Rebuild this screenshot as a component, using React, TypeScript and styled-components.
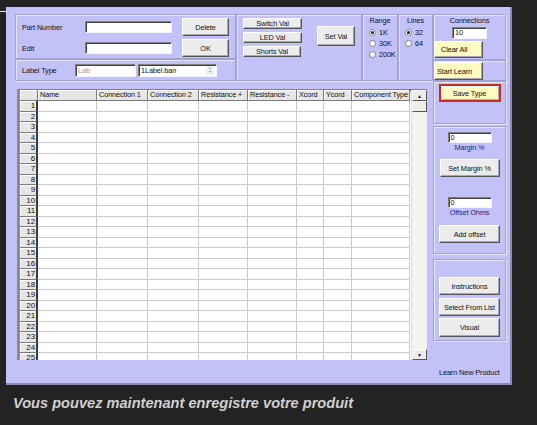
import React from 'react';
import styled, { createGlobalStyle, css } from 'styled-components';

const GlobalStyle = createGlobalStyle`
  body {
    margin: 0;
    background: #232323;
    font-family: 'Liberation Sans', Arial, sans-serif;
  }
`;

const LAV = '#c2c2f9';

const Page = styled.div`
  position: relative;
  width: 537px;
  height: 425px;
  box-sizing: border-box;
  padding: 7px 0 0 6px;
  font-size: 7.3px;
  letter-spacing: -0.1px;
  color: #111;
`;

const CornerMark = styled.div`
  position: absolute;
  left: 0;
  top: 11px;
  width: 6px;
  height: 1px;
  background: #e8e8e8;
`;

const Window = styled.div`
  width: 506px;
  height: 378px;
  box-sizing: border-box;
  background: ${LAV};
  border-right: 2px solid #8c8cb8;
  border-bottom: 2px solid #8c8cb8;
  padding: 7px 0 0 9px;
  display: flex;
`;

const LeftCol = styled.div`
  width: 418px;
  display: flex;
  flex-direction: column;
`;

const RightCol = styled.div`
  width: 73px;
  display: flex;
  flex-direction: column;
`;

const TopRow = styled.div`
  display: flex;
  height: 67px;
`;

const Frame = styled.div<{ $w?: number; $h?: number }>`
  box-sizing: border-box;
  ${(p) => p.$w && css`width: ${p.$w}px;`}
  ${(p) => p.$h && css`height: ${p.$h}px;`}
  border: 1px solid #a2a2d6;
  box-shadow: inset 1px 1px 0 #e6e6ff, 1px 1px 0 #e6e6ff;
`;

const Stack = styled.div<{ $w: number }>`
  width: ${(p) => p.$w}px;
  display: flex;
  flex-direction: column;
`;

const PartFrame = styled(Frame)`
  display: grid;
  grid-template-columns: 63px 87px 47px;
  grid-template-rows: 18px 18px;
  row-gap: 3px;
  padding: 3px 0 0 6px;
  align-items: center;
  & > button {
    margin-left: 10px;
  }
`;

const LabelFrame = styled(Frame)`
  display: flex;
  align-items: center;
  padding-left: 6px;
  gap: 2px;
`;

const Label = styled.span<{ $w?: number; $blue?: boolean }>`
  ${(p) => p.$w && css`width: ${p.$w}px;`}
  white-space: nowrap;
  color: ${(p) => (p.$blue ? '#25257a' : '#111')};
`;

const TextBox = styled.div<{ $w: number; $h?: number; $gray?: boolean }>`
  box-sizing: border-box;
  width: ${(p) => p.$w}px;
  height: ${(p) => p.$h ?? 12}px;
  background: #fff;
  border-top: 1px solid #808080;
  border-left: 1px solid #808080;
  border-right: 1px solid #f4f4f4;
  border-bottom: 1px solid #f4f4f4;
  box-shadow: inset 1px 1px 0 #404040;
  padding-left: 2px;
  line-height: ${(p) => (p.$h ?? 12) - 2}px;
  color: ${(p) => (p.$gray ? '#9a9a9a' : '#111')};
  white-space: nowrap;
  overflow: hidden;
`;

const Combo = styled(TextBox)`
  display: flex;
  justify-content: space-between;
  align-items: center;
  padding-right: 2px;
`;

const Spin = styled.div`
  width: 8px;
  height: 9px;
  display: flex;
  flex-direction: column;
  align-items: center;
  justify-content: center;
  font-size: 4px;
  line-height: 4px;
  color: #909090;
  background: #f2f2f2;
`;

const Btn = styled.button<{ $w: number; $h: number; $yellow?: boolean; $red?: boolean; $pl?: number }>`
  box-sizing: border-box;
  width: ${(p) => p.$w}px;
  height: ${(p) => p.$h}px;
  padding: 0 0 0 ${(p) => p.$pl ?? 0}px;
  margin: 0;
  font: inherit;
  letter-spacing: inherit;
  color: #111;
  text-align: ${(p) => (p.$pl !== undefined ? 'left' : 'center')};
  white-space: nowrap;
  background: ${(p) => (p.$yellow ? '#fbfbc2' : '#ececec')};
  border-top: 1px solid #fff;
  border-left: 1px solid #fff;
  border-right: 1px solid #555;
  border-bottom: 1px solid #555;
  box-shadow: inset -1px -1px 0 #a8a8a8;
  ${(p) =>
    p.$red &&
    css`
      border: 2px solid #cf2a2a;
      box-shadow: inset 1px 1px 0 #fff, inset -1px -1px 0 #b0b0a0;
    `}
`;

const ValFrame = styled(Frame)`
  display: flex;
  align-items: flex-start;
  padding: 3px 0 0 6px;
  gap: 15px;
`;

const BtnCol = styled.div<{ $gap: number }>`
  display: flex;
  flex-direction: column;
  gap: ${(p) => p.$gap}px;
`;

const SetValWrap = styled.div`
  margin-top: 8px;
`;

const OptFrame = styled(Frame)`
  display: flex;
  flex-direction: column;
  align-items: center;
  padding-top: 1px;
`;

const OptTitle = styled.div`
  line-height: 10px;
  margin-bottom: 1px;
`;

const OptList = styled.div`
  align-self: flex-start;
  padding-left: 6px;
  display: flex;
  flex-direction: column;
`;

const OptRow = styled.div`
  display: flex;
  align-items: center;
  gap: 3px;
  height: 11px;
`;

const Radio = styled.span<{ $on?: boolean }>`
  box-sizing: border-box;
  width: 7px;
  height: 7px;
  border-radius: 50%;
  background: #fff;
  border: 1px solid #808080;
  display: flex;
  align-items: center;
  justify-content: center;
  &::after {
    content: '';
    width: 3px;
    height: 3px;
    border-radius: 50%;
    background: ${(p) => (p.$on ? '#111' : 'transparent')};
  }
`;

const ConnFrame = styled(Frame)`
  display: flex;
  flex-direction: column;
  align-items: center;
  padding-top: 1px;
  & > button {
    align-self: flex-start;
    margin-top: 2px;
  }
`;

const PlainFrame = styled(Frame)<{ $mt?: number; $pt?: number; $start?: boolean }>`
  margin-top: ${(p) => p.$mt ?? 0}px;
  padding-top: ${(p) => p.$pt ?? 0}px;
  display: flex;
  flex-direction: column;
  align-items: ${(p) => (p.$start ? 'flex-start' : 'center')};
`;

const Spacer = styled.div<{ $h: number }>`
  height: ${(p) => p.$h}px;
  flex: none;
`;

const Footer = styled.div`
  margin-top: 27px;
  padding-left: 6px;
`;

/* grid */
const cols = [18, 59, 51, 51, 49, 49, 27, 28, 58];
const heads = ['', 'Name', 'Connection 1', 'Connection 2', 'Resistance +', 'Resistance -', 'Xcord', 'Ycord', 'Component Type'];

const GridBox = styled.div`
  margin: 8px 0 0 2px;
  width: 410px;
  height: 271px;
  box-sizing: border-box;
  display: flex;
  background: #fff;
  border-top: 1px solid #808080;
  border-left: 3px solid #8a8a8a;
  box-shadow: inset 1px 1px 0 #505050;
  overflow: hidden;
`;

const Table = styled.div`
  width: 390px;
  display: flex;
  flex-direction: column;
  overflow: hidden;
`;

const Row = styled.div<{ $h: number }>`
  display: grid;
  grid-template-columns: ${cols.map((c) => `${c}px`).join(' ')};
  height: ${(p) => p.$h}px;
  flex: none;
`;

const Cell = styled.div<{ $kind: 'head' | 'num' | 'data' }>`
  box-sizing: border-box;
  overflow: hidden;
  white-space: nowrap;
  ${(p) =>
    p.$kind === 'head' &&
    css`
      background: #e6e6e6;
      border-right: 1px solid #7a7a7a;
      border-bottom: 1px solid #7a7a7a;
      box-shadow: inset 1px 1px 0 #fff;
      padding-left: 2px;
      line-height: 10px;
    `}
  ${(p) =>
    p.$kind === 'num' &&
    css`
      background: #e6e6e6;
      border-right: 2px solid #3a3a3a;
      border-bottom: 1px solid #7a7a7a;
      box-shadow: inset 1px 1px 0 #fff;
      text-align: right;
      padding-right: 1px;
      font-size: 8px;
      line-height: 10px;
    `}
  ${(p) =>
    p.$kind === 'data' &&
    css`
      background: #fff;
      border-right: 1px solid #c9c9c9;
      border-bottom: 1px solid #c9c9c9;
    `}
`;

const ScrollBar = styled.div`
  width: 15px;
  margin-left: 1px;
  display: flex;
  flex-direction: column;
  background: #f3f3f3;
  border-left: 1px solid #dcdcdc;
`;

const ScrollBtn = styled.div<{ $end?: boolean }>`
  box-sizing: border-box;
  height: 11px;
  flex: none;
  ${(p) => p.$end && css`margin-top: auto;`}
  background: #ececec;
  border-top: 1px solid #fff;
  border-left: 1px solid #fff;
  border-right: 1px solid #555;
  border-bottom: 1px solid #555;
  display: flex;
  align-items: center;
  justify-content: center;
  font-size: 5px;
  color: #111;
`;

const Caption = styled.div`
  margin-top: 10px;
  padding-left: 7px;
  font-size: 14.6px;
  line-height: 17px;
  letter-spacing: 0;
  font-weight: bold;
  font-style: italic;
  color: #d0d0d0;
`;

const rows = Array.from({ length: 25 }, (_, i) => i + 1);

const App = () => {
  return (
    <Page>
      <GlobalStyle />
      <CornerMark />
      <Window>
        <LeftCol>
          <TopRow>
            <Stack $w={221}>
              <PartFrame $h={45}>
                <Label>Part Number</Label>
                <TextBox $w={87} />
                <Btn $w={47} $h={18}>Delete</Btn>
                <Label>Edit</Label>
                <TextBox $w={87} />
                <Btn $w={47} $h={18}>OK</Btn>
              </PartFrame>
              <LabelFrame $h={22}>
                <Label $w={51}>Label Type</Label>
                <TextBox $w={61} $h={13} $gray>Lab</TextBox>
                <Combo $w={79} $h={13}>
                  1Label.ban
                  <Spin>
                    <span>▴</span>
                    <span>▾</span>
                  </Spin>
                </Combo>
              </LabelFrame>
            </Stack>
            <ValFrame $w={126}>
              <BtnCol $gap={3}>
                <Btn $w={59} $h={11}>Switch Val</Btn>
                <Btn $w={59} $h={11}>LED Val</Btn>
                <Btn $w={58} $h={11}>Shorts Val</Btn>
              </BtnCol>
              <SetValWrap>
                <Btn $w={38} $h={20}>Set Val</Btn>
              </SetValWrap>
            </ValFrame>
            <OptFrame $w={36}>
              <OptTitle>Range</OptTitle>
              <OptList>
                <OptRow><Radio $on />1K</OptRow>
                <OptRow><Radio />30K</OptRow>
                <OptRow><Radio />200K</OptRow>
              </OptList>
            </OptFrame>
            <OptFrame $w={35}>
              <OptTitle>Lines</OptTitle>
              <OptList>
                <OptRow><Radio $on />32</OptRow>
                <OptRow><Radio />64</OptRow>
              </OptList>
            </OptFrame>
          </TopRow>
          <GridBox>
            <Table>
              <Row $h={11}>
                {heads.map((h, i) => (
                  <Cell key={i} $kind="head">{h}</Cell>
                ))}
              </Row>
              {rows.map((r) => (
                <Row key={r} $h={10.5}>
                  <Cell $kind="num">{r}</Cell>
                  {cols.slice(1).map((_, i) => (
                    <Cell key={i} $kind="data" />
                  ))}
                </Row>
              ))}
            </Table>
            <ScrollBar>
              <ScrollBtn>▲</ScrollBtn>
              <ScrollBtn />
              <ScrollBtn $end>▼</ScrollBtn>
            </ScrollBar>
          </GridBox>
        </LeftCol>
        <RightCol>
          <ConnFrame $h={46}>
            <OptTitle>Connections</OptTitle>
            <TextBox $w={35} $h={12}>10</TextBox>
            <Btn $w={49} $h={17} $yellow $pl={6}>Clear All</Btn>
          </ConnFrame>
          <PlainFrame $h={21} $pt={1} $start>
            <Btn $w={49} $h={18} $yellow $pl={2}>Start Learn</Btn>
          </PlainFrame>
          <PlainFrame $h={43} $pt={2}>
            <Btn $w={62} $h={18} $yellow $red>Save Type</Btn>
          </PlainFrame>
          <PlainFrame $h={128} $mt={2} $pt={5}>
            <TextBox $w={44} $h={11}>0</TextBox>
            <Label $blue>Margin %</Label>
            <Spacer $h={7} />
            <Btn $w={60} $h={18}>Set Margin %</Btn>
            <Spacer $h={20} />
            <TextBox $w={44} $h={11}>0</TextBox>
            <Label $blue>Offset Ohms</Label>
            <Spacer $h={8} />
            <Btn $w={61} $h={18}>Add offset</Btn>
          </PlainFrame>
          <PlainFrame $h={82} $mt={5} $pt={17}>
            <Btn $w={61} $h={18}>Instructions</Btn>
            <Spacer $h={3} />
            <Btn $w={61} $h={18}>Select From List</Btn>
            <Spacer $h={2} />
            <Btn $w={61} $h={19}>Visual</Btn>
          </PlainFrame>
          <Footer>Learn New Product</Footer>
        </RightCol>
      </Window>
      <Caption>Vous pouvez maintenant enregistre votre produit</Caption>
    </Page>
  );
};

export default App;
